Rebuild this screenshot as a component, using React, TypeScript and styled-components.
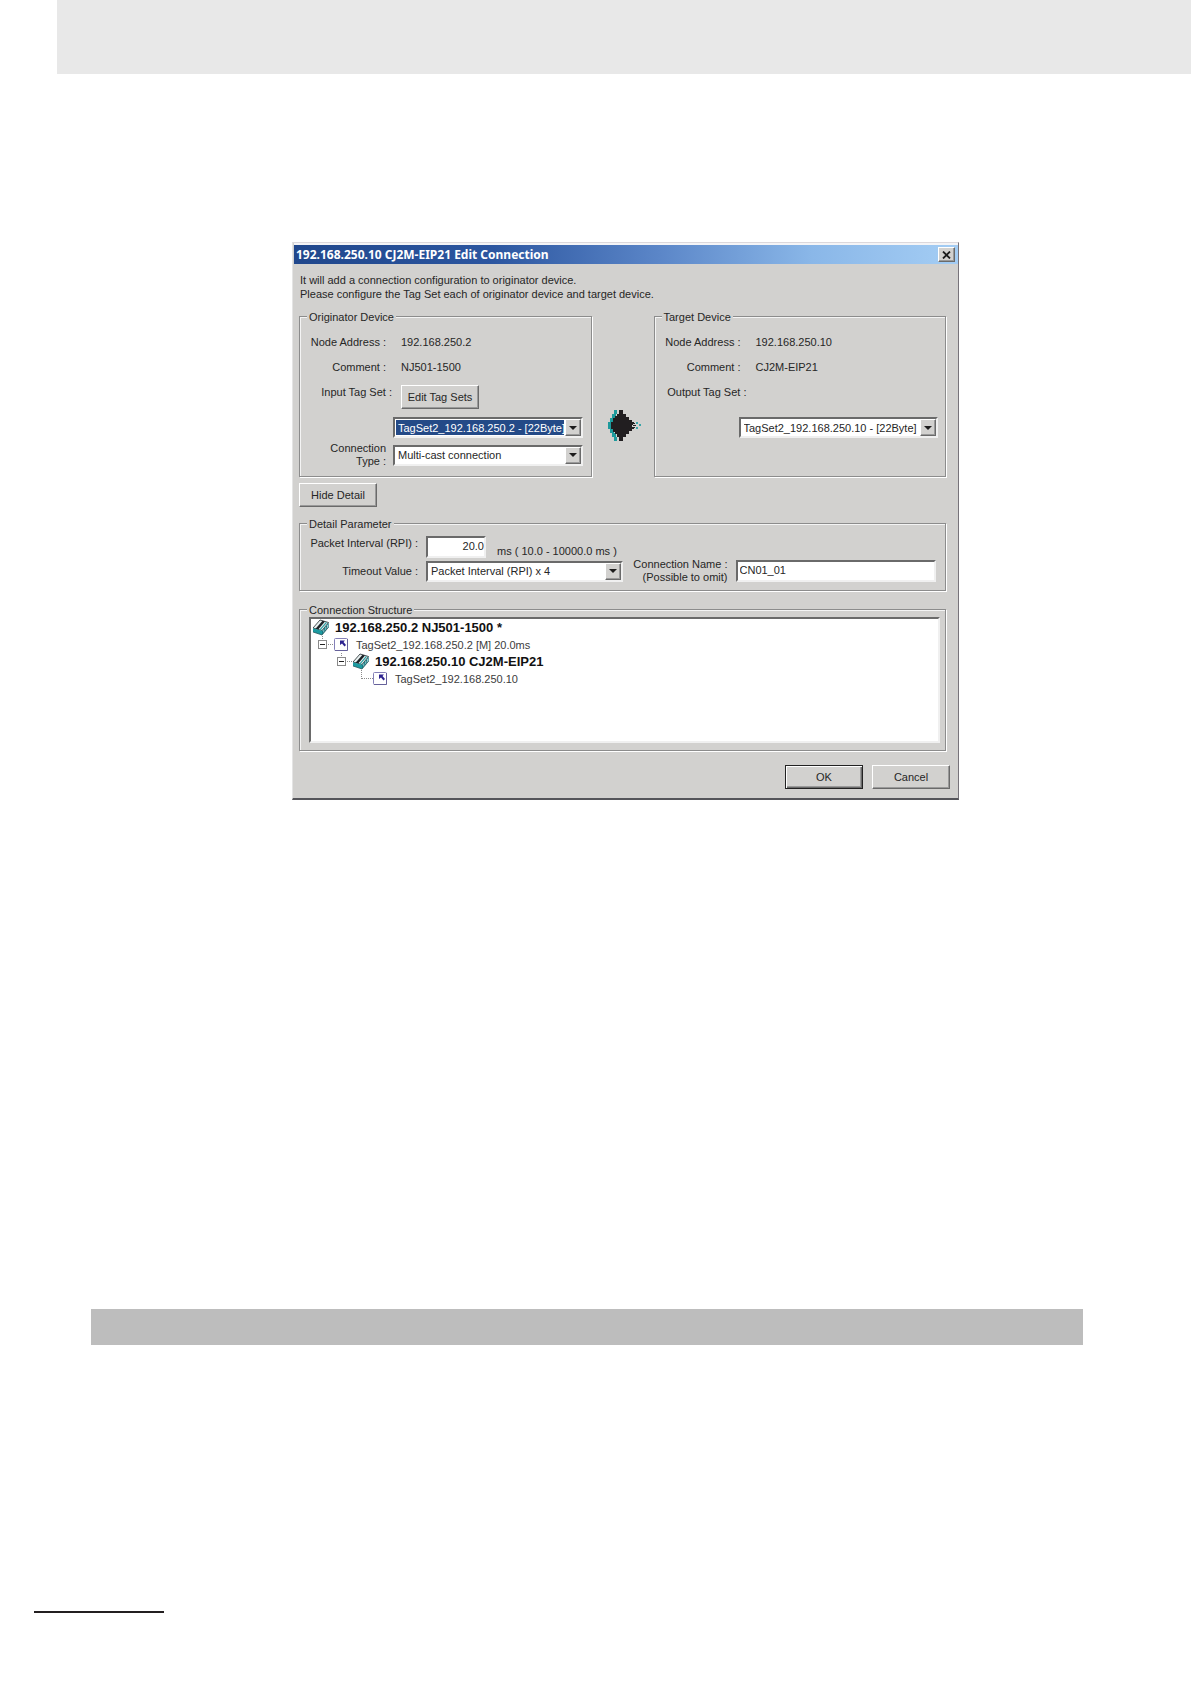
import React from "react";
import styled, { createGlobalStyle, css } from "styled-components";

const face = "#d2d1cf";
const ink = "#262626";
const shade = "#8c8c8c";

const GlobalStyle = createGlobalStyle`
  *, *::before, *::after { box-sizing: border-box; }
  body {
    margin: 0;
    background: #fff;
    color: ${ink};
    font-family: "Liberation Sans", Arial, sans-serif;
    font-size: 11px;
    line-height: 14px;
  }
  button, input, select { font: inherit; color: inherit; margin: 0; }
`;

const raised = css`
  border: 1px solid;
  border-color: #fff #6a6a6a #6a6a6a #fff;
  box-shadow: inset -1px -1px 0 #9a9a9a;
`;

const sunken = css`
  border: 2px solid;
  border-color: #6a6a6a #f0f0f0 #f0f0f0 #6a6a6a;
`;

const Page = styled.div`
  display: flex;
  flex-direction: column;
  min-height: 100vh;
`;

const HeaderBand = styled.header`
  height: 74px;
  margin-left: 57px;
  background: #e8e8e8;
`;

const Content = styled.main`
  flex: 1;
  padding: 168px 108px 0 91px;
`;

const Figure = styled.section`
  padding: 0 124px 0 201px;
`;

const SectionBand = styled.div`
  height: 36px;
  margin-top: 509px;
  background: #bdbdbd;
`;

const PageFooter = styled.footer`
  padding: 0 0 71px 34px;
`;

const FooterRule = styled.hr`
  width: 130px;
  height: 2px;
  margin: 0;
  border: 0;
  background: #231f20;
`;

const Dialog = styled.form`
  background: ${face};
  border: 1px solid;
  border-width: 1px 1px 2px 1px;
  border-color: #dcd8dc #77737a #55555a #e4e4e4;
`;

const TitleBar = styled.div`
  display: flex;
  align-items: center;
  justify-content: space-between;
  height: 21px;
  padding: 0 3px 0 2px;
  margin-left: 1px;
  border-top: 2px solid #f4f4f6;
  background: linear-gradient(90deg, #20478c 0%, #2c56a0 30%, #5b86c8 55%, #8ab7e8 78%, #a4cdf4 100%);
`;

const Title = styled.h1`
  margin: 0;
  color: #fff;
  font-family: "Noto Sans", "Open Sans", sans-serif;
  font-size: 12px;
  font-weight: 700;
  white-space: nowrap;
`;

const CloseButton = styled.button`
  ${raised}
  display: grid;
  place-items: center;
  width: 17px;
  height: 15px;
  padding: 0;
  background: ${face};
`;

const Body = styled.div`
  padding: 9px 12px 0 6px;
`;

const Intro = styled.p`
  margin: 0 0 7px;
  padding-left: 1px;
`;

const Devices = styled.div`
  display: grid;
  grid-template-columns: minmax(0, 1fr) 62px minmax(0, 1fr);
`;

const ArrowCell = styled.div`
  display: flex;
  align-items: flex-end;
  justify-content: flex-end;
  padding: 0 13px 36px 0;
`;

const Group = styled.fieldset<{ $pad?: string }>`
  min-width: 0;
  margin: 0;
  padding: ${(p) => p.$pad ?? "0"};
  border: 1px solid ${shade};
  box-shadow: 1px 1px 0 #fff, inset 1px 1px 0 #f4f4f4;
`;

const Legend = styled.legend`
  margin-left: 7px;
  padding: 2px 2px 0;
  background: ${face};
`;

const Row = styled.div<{ $height?: number; $align?: string; $top?: number }>`
  display: flex;
  align-items: ${(p) => p.$align ?? "center"};
  min-height: ${(p) => p.$height ?? 0}px;
  padding-top: ${(p) => p.$top ?? 0}px;
`;

const labelBox = css<{ $width: number; $gap: number }>`
  flex: none;
  width: ${(p) => p.$width}px;
  margin-right: ${(p) => p.$gap}px;
  text-align: right;
  white-space: nowrap;
`;

const Label = styled.label<{ $width: number; $gap: number }>`
  ${labelBox}
`;

const Term = styled.span<{ $width: number; $gap: number }>`
  ${labelBox}
`;

const StackedLabel = styled(Label)`
  line-height: 13px;
`;

const PushButton = styled.button<{ $default?: boolean }>`
  ${raised}
  ${(p) =>
    p.$default &&
    css`
      border-color: #222;
      box-shadow: inset 1px 1px 0 #fff, inset -1px -1px 0 #6a6a6a, inset -2px -2px 0 #9a9a9a;
    `}
  width: 78px;
  height: 24px;
  padding: 0;
  background: ${face};
`;

const SelectFrame = styled.div<{ $indent?: number }>`
  ${sunken}
  display: grid;
  grid-template-columns: minmax(0, 1fr) 16px;
  flex: 1;
  min-width: 0;
  height: 21px;
  margin-left: ${(p) => p.$indent ?? 0}px;
  background: #fff;
`;

const Picker = styled.select<{ $active?: boolean }>`
  grid-area: 1 / 1 / 2 / 3;
  appearance: none;
  width: 100%;
  height: 17px;
  padding: 0 16px 0 3px;
  border: 0;
  border-radius: 0;
  outline: 0;
  color: ${(p) => (p.$active ? "#fff" : ink)};
  background: ${(p) =>
    p.$active
      ? "linear-gradient(#244a87, #244a87) 1px 1px / calc(100% - 18px) 15px no-repeat, #fff"
      : "#fff"};
  option { color: ${ink}; background: #fff; }
`;

const DropMark = styled.span`
  ${raised}
  grid-area: 1 / 2 / 2 / 3;
  z-index: 1;
  display: grid;
  place-items: center;
  background: ${face};
  pointer-events: none;
`;

const TextBox = styled.input<{ $width?: number; $right?: boolean }>`
  ${sunken}
  flex: ${(p) => (p.$width ? "none" : "1")};
  width: ${(p) => (p.$width ? `${p.$width}px` : "auto")};
  min-width: 0;
  height: 22px;
  padding: 0 ${(p) => (p.$right ? 0 : 2)}px 2px 2px;
  border-radius: 0;
  background: #fff;
  text-align: ${(p) => (p.$right ? "right" : "left")};
`;

const Range = styled.span`
  align-self: flex-end;
  margin-left: 11px;
`;

const Toolbar = styled.div`
  display: flex;
  padding: 6px 0 8px;
`;

const Structure = styled.div`
  padding-top: 10px;
`;

const Tree = styled.ul`
  ${sunken}
  height: 126px;
  margin: 0 5px 0 9px;
  padding: 0;
  list-style: none;
  background: #fff;
  overflow: auto;
`;

const TreeRow = styled.li<{ $pad: number; $strong?: boolean }>`
  display: flex;
  align-items: center;
  height: 17px;
  padding-left: ${(p) => p.$pad}px;
  color: ${(p) => (p.$strong ? "#111" : "#3c3c3c")};
  font-size: ${(p) => (p.$strong ? 13 : 11)}px;
  font-weight: ${(p) => (p.$strong ? 700 : 400)};
  white-space: nowrap;
  svg { flex: none; display: block; }
`;

const NodeName = styled.span`
  margin-left: 6px;
`;

const Toggle = styled.button`
  flex: none;
  padding: 0;
  border: 0;
  background: none;
`;

const Actions = styled.div`
  display: flex;
  justify-content: flex-end;
  gap: 9px;
  padding: 14px 8px 9px;
`;

const CloseGlyph = () => (
  <svg width="9" height="8" viewBox="0 0 9 8" aria-hidden="true">
    <path d="M1 .5 8 7.5M8 .5 1 7.5" stroke="#1c1c1c" strokeWidth="1.8" />
  </svg>
);

const DownGlyph = () => (
  <svg width="8" height="4" viewBox="0 0 8 4" aria-hidden="true">
    <path d="M0 0H8L4 4Z" fill="#1c1c1c" />
  </svg>
);

const ConnectArrow = () => (
  <svg width="33" height="31" viewBox="0 0 33 31" shapeRendering="crispEdges" aria-hidden="true">
    <path
      d="M6 0h3v4H8v4H6v4H5v7h1v4h2v4h1v4H6v-4H4v-4H2v-4H0v-7h2V8h2V4h2Z"
      fill="#1d9a9c"
    />
    <path
      d="M11 0h4v4h3v3h3v3h3v2h2v2h-2v3h2v2h-2v2h-3v3h-3v3h-3v4h-4v-4H9v-3H7v-2H5v-3H3v-7h2V8h2V6h2V4h2Z"
      fill="#211e20"
    />
    <path d="M23 14h2v1h-2zM25 15h3v1h-3zM26 13h1v1h-1zM26 17h1v1h-1z" fill="#211e20" />
    <path d="M28 12h2v2h-2zM31 14h2v2h-2zM28 17h2v2h-2z" fill="#38a4a8" />
  </svg>
);

const DeviceIcon = () => (
  <svg width="16" height="17" viewBox="0 0 16 17" aria-hidden="true">
    <path d="M0 9 7 1l8.500 2.500L9 11.500Z" fill="#e8f0f0" stroke="#20282c" strokeWidth=".8" />
    <path d="m2.500 9.700 7-8 2.500.8-6.800 8Z" fill="#1c2226" />
    <path d="m7 10.800 6.500-7.500" stroke="#2a9ea2" strokeWidth="1.200" />
    <path d="M0 9.200 9 11.700V16L0 13Z" fill="#1c9aa0" />
    <path d="m9 11.700 6.700-8V8L9 16Z" fill="#147a82" />
    <path d="M10.800 10.500v3M12.800 8v3M14.500 6v3" stroke="#bfe0e2" strokeWidth=".8" />
    <path d="M0 13 9 16l6.700-8" fill="none" stroke="#1d4a50" strokeWidth=".7" />
  </svg>
);

const TagIcon = () => (
  <svg width="16" height="17" viewBox="0 0 16 17" aria-hidden="true">
    <rect x=".5" y="2.500" width="13" height="12" rx="1" fill="#fff" stroke="#8480b8" />
    <path d="M1 14.500h12.500V3" fill="none" stroke="#65619a" />
    <path d="M6 4.500h5L9.500 6l2.500 3-1.500 1.500L8 7.500 6 9Z" fill="#2d2390" />
  </svg>
);

const ToggleGlyph = () => (
  <svg width="16" height="17" viewBox="0 0 16 17" shapeRendering="crispEdges" aria-hidden="true">
    <path d="M4.500 0V4M10 8.500h6" stroke="#8a8a8a" strokeDasharray="1 1" />
    <rect x=".5" y="4.500" width="8" height="8" fill="#fff" stroke="#8a8a8a" />
    <path d="M2 8.500h5" stroke="#222" />
  </svg>
);

const LeafGuide = () => (
  <svg width="16" height="17" viewBox="0 0 16 17" shapeRendering="crispEdges" aria-hidden="true">
    <path d="M4.500 0V9M5 8.500h11" fill="none" stroke="#8a8a8a" strokeDasharray="1 1" />
  </svg>
);

type DropDownProps = {
  id: string;
  value: string;
  active?: boolean;
  indent?: number;
};

const DropDown = ({ id, value, active, indent }: DropDownProps) => (
  <SelectFrame $indent={indent}>
    <Picker id={id} $active={active} defaultValue={value}>
      <option>{value}</option>
    </Picker>
    <DropMark>
      <DownGlyph />
    </DropMark>
  </SelectFrame>
);

const Fact = ({ name, value }: { name: string; value: string }) => (
  <Row $height={25}>
    <Term $width={86} $gap={15}>{name}</Term>
    <span>{value}</span>
  </Row>
);

export default function App() {
  return (
    <Page>
      <GlobalStyle />
      <HeaderBand />
      <Content>
        <Figure>
          <Dialog onSubmit={(e: React.FormEvent) => e.preventDefault()}>
            <TitleBar>
              <Title>192.168.250.10 CJ2M-EIP21 Edit Connection</Title>
              <CloseButton type="button" aria-label="Close">
                <CloseGlyph />
              </CloseButton>
            </TitleBar>
            <Body>
              <Intro>
                It will add a connection configuration to originator device.
                <br />
                Please configure the Tag Set each of originator device and target device.
              </Intro>

              <Devices>
                <Group $pad="5px 8px 8px 0">
                  <Legend>Originator Device</Legend>
                  <Fact name="Node Address :" value="192.168.250.2" />
                  <Fact name="Comment :" value="NJ501-1500" />
                  <Row $height={38} $align="flex-start" $top={6}>
                    <Label htmlFor="input-tag-set" $width={92} $gap={9}>Input Tag Set :</Label>
                    <PushButton type="button">Edit Tag Sets</PushButton>
                  </Row>
                  <Row $height={25} $align="flex-start">
                    <DropDown id="input-tag-set" value="TagSet2_192.168.250.2 - [22Byte]" active indent={93} />
                  </Row>
                  <Row>
                    <StackedLabel htmlFor="connection-type" $width={86} $gap={7}>
                      Connection
                      <br />
                      Type :
                    </StackedLabel>
                    <DropDown id="connection-type" value="Multi-cast connection" />
                  </Row>
                </Group>

                <ArrowCell>
                  <ConnectArrow />
                </ArrowCell>

                <Group $pad="5px 7px 8px 0">
                  <Legend>Target Device</Legend>
                  <Fact name="Node Address :" value="192.168.250.10" />
                  <Fact name="Comment :" value="CJ2M-EIP21" />
                  <Row $height={38} $align="flex-start" $top={6}>
                    <Label htmlFor="output-tag-set" $width={92} $gap={9}>Output Tag Set :</Label>
                  </Row>
                  <Row $align="flex-start">
                    <DropDown id="output-tag-set" value="TagSet2_192.168.250.10 - [22Byte]" indent={84} />
                  </Row>
                </Group>
              </Devices>

              <Toolbar>
                <PushButton type="button">Hide Detail</PushButton>
              </Toolbar>

              <Group $pad="5px 9px 6px 0">
                <Legend>Detail Parameter</Legend>
                <Row $align="flex-start">
                  <Label htmlFor="rpi" $width={118} $gap={8}>Packet Interval (RPI) :</Label>
                  <TextBox id="rpi" $width={60} $right defaultValue="20.0" />
                  <Range>ms ( 10.0 - 10000.0 ms )</Range>
                </Row>
                <Row>
                  <Label htmlFor="timeout" $width={118} $gap={8}>Timeout Value :</Label>
                  <DropDown id="timeout" value="Packet Interval (RPI) x 4" />
                  <StackedLabel htmlFor="connection-name" $width={105} $gap={8}>
                    Connection Name :
                    <br />
                    (Possible to omit)
                  </StackedLabel>
                  <TextBox id="connection-name" defaultValue="CN01_01" />
                </Row>
              </Group>

              <Structure>
                <Group $pad="0 0 7px">
                  <Legend>Connection Structure</Legend>
                  <Tree>
                    <TreeRow $pad={2} $strong>
                      <DeviceIcon />
                      <NodeName>192.168.250.2 NJ501-1500 *</NodeName>
                    </TreeRow>
                    <TreeRow $pad={7}>
                      <Toggle type="button" aria-label="Collapse"><ToggleGlyph /></Toggle>
                      <TagIcon />
                      <NodeName>TagSet2_192.168.250.2 [M] 20.0ms</NodeName>
                    </TreeRow>
                    <TreeRow $pad={26} $strong>
                      <Toggle type="button" aria-label="Collapse"><ToggleGlyph /></Toggle>
                      <DeviceIcon />
                      <NodeName>192.168.250.10 CJ2M-EIP21</NodeName>
                    </TreeRow>
                    <TreeRow $pad={46}>
                      <LeafGuide />
                      <TagIcon />
                      <NodeName>TagSet2_192.168.250.10</NodeName>
                    </TreeRow>
                  </Tree>
                </Group>
              </Structure>
            </Body>
            <Actions>
              <PushButton type="submit" $default>OK</PushButton>
              <PushButton type="button">Cancel</PushButton>
            </Actions>
          </Dialog>
        </Figure>
        <SectionBand />
      </Content>
      <PageFooter>
        <FooterRule />
      </PageFooter>
    </Page>
  );
}
